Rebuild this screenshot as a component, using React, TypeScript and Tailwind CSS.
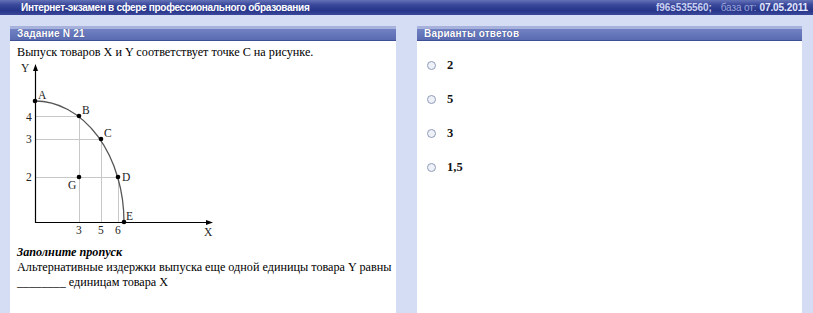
import React from "react";

const serif = { fontFamily: '"Liberation Serif", "Times New Roman", serif' } as const;
const sans = { fontFamily: '"Liberation Sans", Arial, sans-serif' } as const;

function Chart() {
  const ox = 25;
  const oy = 162;
  const pts: Record<string, [number, number]> = {
    A: [25, 41],
    B: [69, 56],
    C: [91, 79],
    D: [108, 117],
    E: [114, 162],
    G: [69, 117],
  };
  return (
    <svg width="220" height="180" viewBox="0 0 220 180" className="block" style={serif}>
      <g stroke="#c8c8c8" strokeWidth="1">
        <line x1={ox} y1="56.5" x2="69" y2="56.5" />
        <line x1={ox} y1="79.5" x2="91" y2="79.5" />
        <line x1={ox} y1="117.5" x2="108" y2="117.5" />
        <line x1="69.5" y1="56" x2="69.5" y2={oy} />
        <line x1="91.5" y1="79" x2="91.5" y2={oy} />
        <line x1="108.5" y1="117" x2="108.5" y2={oy} />
      </g>
      <g stroke="#000" strokeWidth="1.2">
        <line x1="25.5" y1="9" x2="25.5" y2="162.5" />
        <line x1="25" y1="162.5" x2="198" y2="162.5" />
      </g>
      <polygon points="25.5,4 23,11 28,11" fill="#000" />
      <polygon points="203,162.5 196,160 196,165" fill="#000" />
      <path d="M25 41 A 89 121 0 0 1 114 162" fill="none" stroke="#555" strokeWidth="1.3" />
      {Object.entries(pts).map(([k, [x, y]]) => (
        <circle key={k} cx={x} cy={y} r="2.3" fill="#000" />
      ))}
      <g fontSize="11.5" fill="#222">
        <text x="11" y="12">Y</text>
        <text x="194" y="176">X</text>
        <text x="28" y="39">A</text>
        <text x="72" y="54">B</text>
        <text x="94" y="77">C</text>
        <text x="112" y="121">D</text>
        <text x="116" y="160">E</text>
        <text x="58" y="129">G</text>
        <text x="16" y="61">4</text>
        <text x="16" y="83">3</text>
        <text x="16" y="121">2</text>
        <text x="66" y="174">3</text>
        <text x="88" y="174">5</text>
        <text x="105" y="174">6</text>
      </g>
    </svg>
  );
}

function PanelHeader({ title }: { title: string }) {
  return (
    <div
      className="h-[15px] flex items-center pl-[7px] text-white font-bold text-[10px] border-b border-[#3f4f96]"
      style={{
        ...sans,
        background: "linear-gradient(to bottom, #a7b2dc 0%, #a7b2dc 20%, #7080c2 25%, #5b6bb1 100%)",
        textShadow: "0 0 1px #2c3a80",
      }}
    >
      <span className="tracking-[0.2px]">{title}</span>
    </div>
  );
}

function Radio({ label }: { label: string }) {
  return (
    <div className="h-[34px] flex items-center pl-[10px]">
      <span className="w-[9px] h-[9px] rounded-full border-[1.5px] border-[#8f9bb8] bg-[#eef1f8] shrink-0" />
      <span className="ml-[11px] text-[12.5px] font-bold text-[#111]" style={serif}>
        {label}
      </span>
    </div>
  );
}

export default function App() {
  return (
    <div className="w-[813px] h-[313px] bg-[#d5ddf4] overflow-hidden flex flex-col">
      <div
        className="h-[15px] shrink-0 flex items-center justify-between pl-[21px] pr-[5px] text-[10px] font-bold"
        style={{
          ...sans,
          background: "linear-gradient(to bottom, #6472b8 0%, #3c4a9c 30%, #27358a 70%, #3a479a 100%)",
        }}
      >
        <span className="text-white tracking-[-0.3px]">Интернет-экзамен в сфере профессионального образования</span>
        <span className="flex items-center tracking-[-0.1px]">
          <span className="text-[#c9d1f2]">f96s535560;</span>
          <span className="ml-[9px] font-normal text-[#9aa5da]">база от:</span>
          <span className="ml-[3px] text-[#e3e8ff]">07.05.2011</span>
        </span>
      </div>
      <div className="flex-1 flex pt-[11px] pl-[10px] gap-[21px] pr-[11px]">
        <div className="w-[386px] bg-white flex flex-col">
          <PanelHeader title="Задание N 21" />
          <div className="pt-[4px] pl-[7px] text-[12.2px] leading-[15px] text-black whitespace-nowrap" style={serif}>
            Выпуск товаров X и Y соответствует точке С на рисунке.
          </div>
          <Chart />
          <div className="mt-[5px] pl-[7px] text-[12.2px] leading-[15px] text-black whitespace-nowrap" style={serif}>
            <div className="font-bold italic">Заполните пропуск</div>
            <div>Альтернативные издержки выпуска еще одной единицы товара Y равны</div>
            <div>________ единицам товара X</div>
          </div>
        </div>
        <div className="w-[385px] bg-white flex flex-col">
          <PanelHeader title="Варианты ответов" />
          <div className="pt-[7px]">
            <Radio label="2" />
            <Radio label="5" />
            <Radio label="3" />
            <Radio label="1,5" />
          </div>
        </div>
      </div>
    </div>
  );
}
